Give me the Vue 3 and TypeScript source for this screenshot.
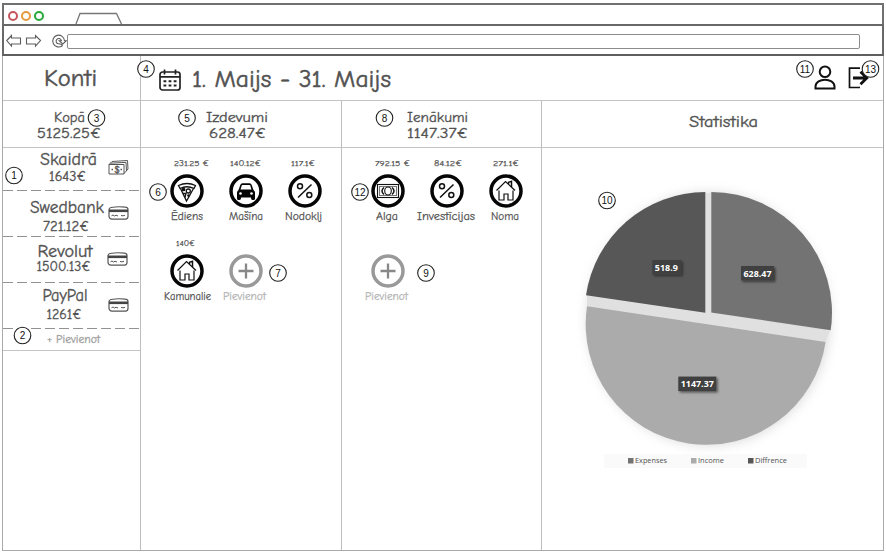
<script setup lang="ts">
import { h } from 'vue'

interface LetteringProps { text: string; w: number; size: number; dx?: number; weight?: number }

// One line of text fitted to a fixed width
const Lettering = (p: LetteringProps) =>
  h('svg', { width: p.w, height: p.size, style: { overflow: 'visible', display: 'block' } }, [
    h('text', {
      x: p.dx ?? 0, y: p.size * 0.86, 'font-size': p.size * 1.03,
      textLength: p.w, lengthAdjust: 'spacingAndGlyphs', fill: 'currentColor',
      stroke: 'currentColor', 'stroke-width': p.weight ?? 0.35,
    }, p.text),
  ])
Lettering.props = ['text', 'w', 'size', 'dx', 'weight']

const accounts = [
  { name: 'Skaidrā', nw: 57, sum: '1643€', sw: 37, dx: 1, icon: 'cash' },
  { name: 'Swedbank', nw: 74, sum: '721.12€', sw: 46, dx: 0, icon: 'card' },
  { name: 'Revolut', nw: 55, sum: '1500.13€', sw: 54, dx: -2.5, icon: 'card' },
  { name: 'PayPal', nw: 45, sum: '1261€', sw: 35, dx: -2.5, icon: 'card' },
]

interface Item { sum: string; sw: number; dx: number; name: string; nw: number; ndx: number; icon: string }
const columns: { title: string; tw: number; total: string; ow: number; items: Item[] }[] = [
  {
    title: 'Izdevumi', tw: 62, total: '628.47€', ow: 57,
    items: [
      { sum: '231.25 €', sw: 35, dx: 5, name: 'Ēdiens', nw: 32, ndx: 0, icon: 'pizza' },
      { sum: '140.12€', sw: 31, dx: 0, name: 'Mašīna', nw: 34, ndx: 0, icon: 'car' },
      { sum: '117.1€', sw: 24, dx: -2, name: 'Nodoklj', nw: 37, ndx: -1, icon: 'percent' },
      { sum: '140€', sw: 19, dx: -1, name: 'Kamunalie', nw: 47, ndx: 1, icon: 'house' },
      { sum: '', sw: 10, dx: 0, name: 'Pievienot', nw: 43, ndx: -1, icon: 'plus' },
    ],
  },
  {
    title: 'Ienākumi', tw: 61, total: '1147.37€', ow: 61,
    items: [
      { sum: '792.15 €', sw: 35, dx: 5, name: 'Alga', nw: 22, ndx: -1, icon: 'note' },
      { sum: '84.12€', sw: 28, dx: 1, name: 'Investīcijas', nw: 58, ndx: -1, icon: 'percent' },
      { sum: '271.1€', sw: 26, dx: 0, name: 'Noma', nw: 28, ndx: -1, icon: 'house' },
      { sum: '', sw: 10, dx: 0, name: 'Pievienot', nw: 43, ndx: -1, icon: 'plus' },
    ],
  },
]

const markers = [
  { n: 1, x: 14, y: 175.5 }, { n: 2, x: 22.5, y: 335.5 }, { n: 3, x: 96.5, y: 118 },
  { n: 4, x: 146, y: 69 }, { n: 5, x: 187, y: 118 }, { n: 6, x: 158, y: 192 },
  { n: 7, x: 278, y: 273 }, { n: 8, x: 384.5, y: 118 }, { n: 9, x: 426, y: 273 },
  { n: 10, x: 607, y: 200.5 }, { n: 11, x: 805, y: 69 }, { n: 12, x: 360, y: 192 },
  { n: 13, x: 870.5, y: 69 },
]

const tags = [
  { t: '518.9', x: 72.3, y: 80, w: 29, tw: 23 },
  { t: '628.47', x: 161, y: 86, w: 33, tw: 28 },
  { t: '1147.37', x: 98.3, y: 196.6, w: 38, tw: 33 },
]

const legend = [
  { t: 'Expenses', w: 32, c: '#737373' },
  { t: 'Income', w: 26, c: '#ababab' },
  { t: 'Diffrence', w: 32, c: '#575757' },
]
</script>

<template>
  <div class="window">
    <div class="tabs">
      <i class="dot red" /><i class="dot amber" /><i class="dot green" />
      <svg class="tab" width="48" height="12"><path d="M1 12 5 1.5H41.500L46.500 12" fill="#fff" stroke="#777" stroke-width="1.300" /></svg>
    </div>
    <div class="toolbar">
      <svg width="59" height="18" fill="none" stroke="#5c5c5c" stroke-width="1.100">
        <path d="M.8 8.500 5.500 3.500V6H14.500V12H5.500V14Z" />
        <path d="M34.500 8.500 29.500 3.500V6H20.500V12H29.500V14Z" />
        <path d="M56.300 13.700A5.900 5.900 0 1 1 58.500 8.800H60.300L56.800 12 53.300 8.800H55.500C54.800 6.300 52.300 5.800 50.800 7.300 49.300 9 50.300 12 53 11.800L55.500 12.500Z" />
      </svg>
      <div class="address" />
    </div>

    <div class="app">
      <aside>
        <div class="heading"><Lettering text="Konti" :w="53" :size="24" :weight="0.5" /></div>
        <div class="summary side">
          <Lettering text="Kopā" :w="31" :size="14.5" />
          <Lettering text="5125.25€" :w="64" :size="14.5" />
        </div>
        <div v-for="a in accounts" :key="a.name" class="account">
          <div class="words">
            <Lettering :text="a.name" :w="a.nw" :size="17" :dx="a.dx" />
            <Lettering :text="a.sum" :w="a.sw" :size="14.5" :dx="a.dx - 1" />
          </div>
          <svg v-if="a.icon === 'cash'" class="acc-icon" width="21" height="17" fill="none" stroke="#555" stroke-width="1">
            <path d="M1 5.500 4 2.500 19.500 1.500 20 10 16 14.500M2.500 4.200 18 3.400 18.500 12M1 5.500H16V15H1Z" />
            <path d="M3.500 10.500H5M12.500 10.500H14" stroke-width="1.500" />
            <text x="6.200" y="13.800" font-size="9.500" stroke-width=".4" fill="#444">$</text>
          </svg>
          <svg v-else class="acc-icon" width="21" height="17" fill="none" stroke="#555" stroke-width="1.200">
            <path d="M1 4.500Q1 3 3 2.500 10.500 1.200 17.500 2.200 20 2.500 20 4.500V11.500Q20 14 17.500 14.200H4Q1.300 14 1 11.500Z" />
            <path d="M1 5.800H20" stroke-width="2.600" stroke="#444" />
            <path d="M3.500 10.800 5 10 6.500 11 8 10.200 10 11M13 10.500 15 10.800 17 10.300" stroke-width="1" />
          </svg>
        </div>
        <div class="add"><Lettering text="+ Pievienot" :w="53" :size="11.5" /></div>
      </aside>

      <main>
        <header>
          <svg width="22" height="22" fill="none" stroke="#222" stroke-width="1.700">
            <rect x="1" y="3" width="20" height="18" rx="2.500" />
            <path d="M1 7.800H21M5.500 .5V5.500M16.500 .5V5.500" />
            <path d="M4.500 12.300H17.500M4.500 16.600H17.500" stroke-dasharray="2.800 2.300" stroke-width="2" />
          </svg>
          <Lettering class="period" text="1. Maijs - 31. Maijs" :w="199" :size="24" :weight="0.5" />
          <svg class="user" width="22" height="25" fill="none" stroke="#111" stroke-width="2">
            <circle cx="11" cy="6.800" r="5.300" />
            <path d="M1.500 23.500V21.500C2 12.500 20 12.500 20.500 21.500V23.500Z" />
          </svg>
          <svg class="leave" width="21" height="22" fill="none" stroke="#111">
            <path d="M12 1.200H1.500V20.500H12" stroke-width="1.700" />
            <path d="M5 11H18M12.500 4.800 18.800 11 12.500 17.200" stroke-width="2.800" />
          </svg>
        </header>
        <div class="columns">
          <section v-for="c in columns" :key="c.title">
            <div class="summary">
              <Lettering :text="c.title" :w="c.tw" :size="14.5" />
              <Lettering :text="c.total" :w="c.ow" :size="14.5" />
            </div>
            <div class="items">
              <div v-for="i in c.items" :key="i.name" class="item" :class="{ faded: i.icon === 'plus' }">
                <Lettering class="sum" :text="i.sum" :w="i.sw" :size="8.5" :dx="i.dx" :weight="0.25" />
                <svg class="badge" width="34" height="34" fill="none" stroke="#111" stroke-width="1.300">
                  <circle cx="17" cy="17" r="15" stroke-width="3.500" :stroke="i.icon === 'plus' ? '#999' : '#050505'" />
                  <g v-if="i.icon === 'pizza'">
                    <path d="M8.500 11.500Q17 7.500 25.500 11.500L24 14.500Q17 11 10 14.500Z" />
                    <path d="M10.500 14.500 16.500 27 23.500 14.500M13 19.500H16L15 23.500" />
                    <circle cx="18.300" cy="17" r="2" /><circle cx="13.600" cy="15.500" r="1.200" fill="#111" />
                    <circle cx="18.500" cy="21.500" r=".7" fill="#111" />
                  </g>
                  <g v-else-if="i.icon === 'car'" stroke="none">
                    <path d="M9.500 16 11.300 11Q11.800 9.300 13.500 9.300H20.500Q22.200 9.300 22.700 11L24.500 16Q26 17 26 18.500V24.500Q26 26 24.500 26H23.500Q22 26 22 24V23.500H12V24Q12 26 10.500 26H9.500Q8 26 8 24.500V18.500Q8 17 9.500 16Z" fill="#050505" />
                    <path d="M11.500 15.500 12.800 11.500Q13 11 13.500 11H20.500Q21 11 21.200 11.500L22.500 15.500Z" fill="#fff" />
                    <circle cx="11.500" cy="19.500" r="1.300" fill="#fff" /><circle cx="22.500" cy="19.500" r="1.300" fill="#fff" />
                  </g>
                  <g v-else-if="i.icon === 'percent'" stroke-width="1.500">
                    <circle cx="12" cy="12.200" r="2.500" /><circle cx="21.300" cy="21" r="2.500" /><path d="M23.500 10.500 10 23.500" />
                  </g>
                  <g v-else-if="i.icon === 'house'" stroke-width="1.200">
                    <path d="M7.500 16.500 16.500 7.500 26 16.500M10 16.500V26H15V20H19V26H24V16.500" />
                    <path d="M19.500 10V8.300L22.500 7.300V13" stroke-width="1.500" />
                  </g>
                  <g v-else-if="i.icon === 'note'" stroke-width="1.100">
                    <rect x="6.500" y="10.500" width="21" height="13" /><path d="M8.500 12.500H25.500V21.500H8.500Z" stroke="#777" />
                    <path d="M13 13.500Q9 17 13 20.500M21 13.500Q25 17 21 20.500" stroke-width="1.500" /><ellipse cx="17" cy="17" rx="3.300" ry="4" />
                  </g>
                  <path v-else d="M9.500 17H24.500M17 9.500V24.500" stroke="#888" stroke-width="2.300" />
                </svg>
                <Lettering :text="i.name" :w="i.nw" :size="12" :dx="i.ndx" :weight="0.25" />
              </div>
            </div>
          </section>
          <section class="stats">
            <div class="summary"><Lettering text="Statistika" :w="69" :size="15" /></div>
            <svg class="pie" width="270" height="274">
              <defs>
                <filter id="soft" x="-15%" y="-15%" width="130%" height="130%"><feGaussianBlur stdDeviation="6" /></filter>
                <filter id="drop" x="-20%" y="-30%" width="150%" height="180%"><feDropShadow dx="1.500" dy="1.500" stdDeviation="1" flood-opacity=".5" /></filter>
              </defs>
              <ellipse cx="128.500" cy="139" rx="121" ry="126" fill="#ccc" opacity=".75" filter="url(#soft)" />
              <path d="M124 13H133V133L250 151 245 163 7 127 7 115 124 132Z" fill="#e0e0e0" />
              <path d="M125.300 132.700V12A120.700 120.700 0 0 0 6 115.300Z" fill="#575757" />
              <path d="M131.300 132.500V12A120.700 120.700 0 0 1 250.700 150.300Z" fill="#737373" />
              <path d="M7 126.200 245.600 162A120 120 0 0 1 7 126.200Z" fill="#ababab" />
              <g v-for="t in tags" :key="t.t" class="tag">
                <rect :x="t.x" :y="t.y" :width="t.w" height="14.500" fill="#404040" filter="url(#drop)" />
                <text :x="t.x + 2.5" :y="t.y + 10.5" :textLength="t.tw" lengthAdjust="spacingAndGlyphs">{{ t.t }}</text>
              </g>
            </svg>
            <div class="legend">
              <span v-for="l in legend" :key="l.t">
                <svg width="6" height="6"><rect width="5.500" height="5.500" :fill="l.c" /></svg>
                <Lettering :text="l.t" :w="l.w" :size="7.2" :weight="0" />
              </span>
            </div>
          </section>
        </div>
      </main>
    </div>

    <svg class="markers" width="886" height="552">
      <g v-for="m in markers" :key="m.n">
        <circle :cx="m.x" :cy="m.y" r="8.300" fill="#fff" stroke="#222" stroke-width="1.100" />
        <text :x="m.x" :y="m.y + 3.5" text-anchor="middle">{{ m.n }}</text>
      </g>
    </svg>
  </div>
</template>

<style>
body { background: #fff; }
</style>

<style scoped>
.window { position: relative; box-sizing: border-box; width: 886px; height: 552px; padding: 3px 2px 1px; color: #525252; font-family: "Comic Sans MS", "Comic Neue", "DejaVu Sans", sans-serif; display: flex; flex-direction: column; }
.tabs { box-sizing: border-box; height: 21px; border: 2px solid #707070; border-bottom: 0; display: flex; align-items: center; gap: 3px; padding-left: 4px; }
.dot { box-sizing: border-box; width: 10px; height: 10px; border: 2px solid; border-radius: 50%; margin-top: 2px; }
.red { color: #c4565c; } .amber { color: #e39a3c; } .green { color: #26a838; }
.tab { align-self: flex-end; margin-left: 28px; }
.toolbar { box-sizing: border-box; height: 32px; border: 2px solid #686868; border-bottom-color: #5e5e5e; display: flex; align-items: center; padding: 0 22px 0 2px; }
.toolbar svg { overflow: visible; margin-top: 2px; }
.address { flex: 1; box-sizing: border-box; height: 15px; border: 1px solid #8c8c8c; border-radius: 2px; margin-top: 3px; margin-left: 2px; }
.app { flex: 1; box-sizing: border-box; display: flex; border: 1px solid #aaa; border-top: 0; }
aside { box-sizing: border-box; width: 138px; border-right: 1px solid #bdbdbd; }
.heading { box-sizing: border-box; height: 45px; border-bottom: 1px solid #c4c4c4; padding: 9px 0 0 41px; }
.summary { box-sizing: border-box; height: 47px; border-bottom: 1px solid #c4c4c4; display: flex; flex-direction: column; align-items: center; gap: 1.500px; padding: 8.500px 8px 0 0; }
.summary.side { padding-right: 5px; padding-top: 9px; }
.account { box-sizing: border-box; display: flex; gap: 3px; height: 46px; padding-left: 26px; background: repeating-linear-gradient(90deg, #929292 0 10px, transparent 10px 14px) 0 100% / 100% 1px no-repeat; }
.words { width: 76px; display: flex; flex-direction: column; align-items: center; }
.account:nth-child(3) { height: 43px; } .account:nth-child(3) .words { padding-top: 2px; gap: 1.500px; } .account:nth-child(3) .acc-icon { margin-top: 11px; }
.account:nth-child(4) .words { padding-top: 7px; gap: 4px; }
.account:nth-child(5) .words { padding-top: 4.500px; gap: .5px; }
.account:nth-child(6) .words { padding-top: 2.500px; gap: 4.500px; }
.account:nth-child(5) .acc-icon { margin-left: -1px; }
.acc-icon { margin-top: 14px; }
.add { box-sizing: border-box; height: 22px; padding: 4px 0 0 44px; border-bottom: 1px solid #c4c4c4; color: #a3a3a3; }
main { flex: 1; display: flex; flex-direction: column; }
header { box-sizing: border-box; height: 45px; border-bottom: 1px solid #c4c4c4; display: flex; align-items: flex-start; padding: 13px 14px 0 18px; }
.period { margin: -3px 0 0 11px; }
.user { margin: -4px 12px 0 auto; }
.leave { margin-top: -2px; }
.columns { flex: 1; display: grid; grid-template-columns: 201px 200px 1fr; }
section { border-right: 1px solid #bdbdbd; }
.items { display: grid; grid-template-columns: repeat(3, 59px); grid-auto-rows: 80px; padding: 11px 0 0 16px; }
.item { display: flex; flex-direction: column; align-items: center; }
.item .sum { color: #555; }
.badge { margin: 6px 0 2px; }
.item.faded { color: #b3b3b3; }
.stats { border: 0; display: flex; flex-direction: column; }
.stats .summary { padding: 13px 0 0 21px; }
.pie { margin: 32px 0 0 38px; overflow: visible; }
.tag text { font: bold 8.500px "Open Sans", sans-serif; fill: #fff; }
.legend { width: 203px; height: 14px; margin-left: 62px; background: #fafafa; box-sizing: border-box; padding-left: 24px; display: flex; gap: 24px; align-items: center; font-family: "Open Sans", sans-serif; }
.legend span { display: flex; gap: 1px; align-items: center; }
.markers { position: absolute; left: 0; top: 0; }
.markers text { font: 10px "Liberation Sans", sans-serif; fill: #111; }
</style>
